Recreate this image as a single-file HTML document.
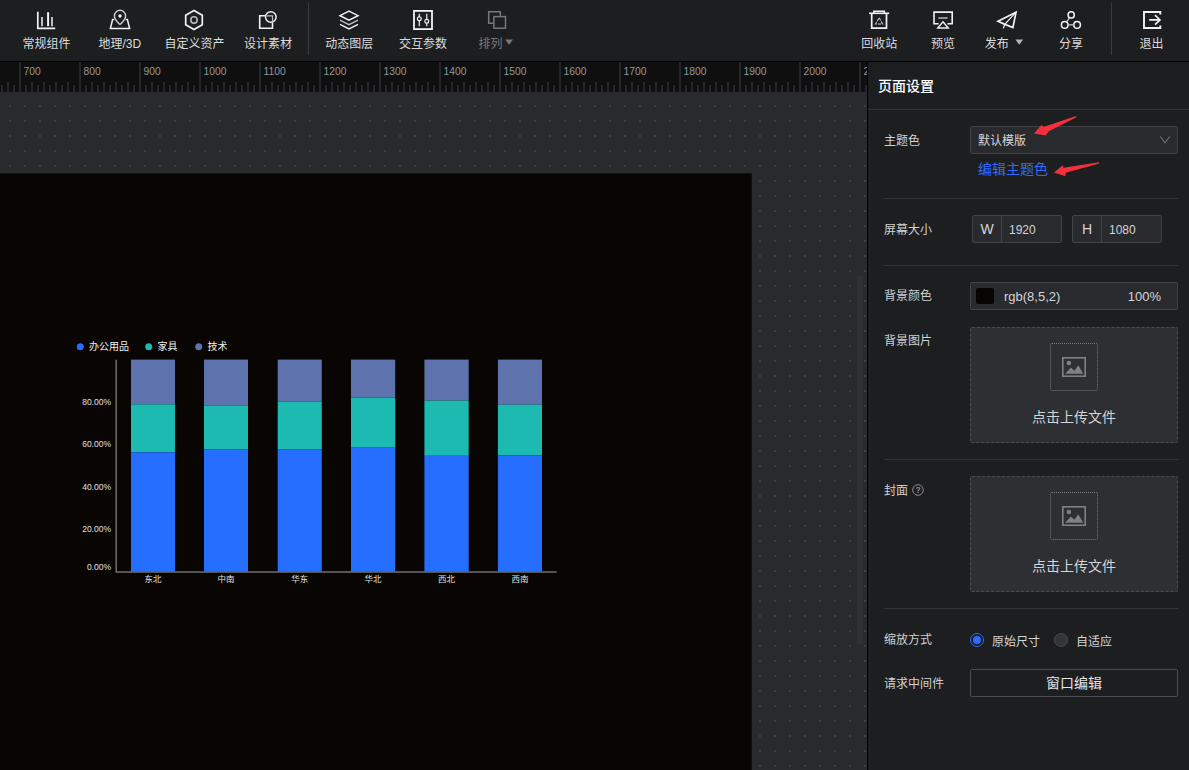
<!DOCTYPE html>
<html lang="zh-CN">
<head>
<meta charset="utf-8">
<title>页面设置</title>
<style>
*{box-sizing:border-box;margin:0;padding:0}
html,body{width:1189px;height:770px;overflow:hidden;background:#292a2e}
body{position:relative;font-family:"Liberation Sans","Noto Sans CJK SC",sans-serif;font-size:13px;color:#d4d5d7}
.abs{position:absolute}
/* toolbar */
#toolbar{position:absolute;left:0;top:0;width:1189px;height:61px;background:#1d1e20}
#tbline{position:absolute;left:0;top:61px;width:1189px;height:1px;background:#000}
.tbi{position:absolute;top:0;height:60px;width:80px;margin-left:-40px;text-align:center}
.tbi svg{position:absolute;left:50%;top:8px;margin-left:-12px;width:24px;height:24px;fill:none;stroke:#e6e6e6;stroke-width:1.5}
.tbi span{position:absolute;left:0;right:0;top:34px;font-size:12px;line-height:16px;color:#d6d7d9;white-space:nowrap}
.tbi.dis svg{stroke:#6f7073}
.tbi.dis span{color:#6f7073}
.tl{position:absolute;top:35.5px;width:100px;margin-left:-50px;text-align:center;font-size:12px;line-height:17px;color:#dcdcde;white-space:nowrap}
.tl.dis{color:#77787a}
.tbdiv{position:absolute;top:3px;width:1px;height:52px;background:#3a3b3e}
/* ruler */
#ruler{position:absolute;left:0;top:62px;width:867px;height:30px;background:#0f0f10;overflow:hidden}
#ruler svg{position:absolute;left:0;top:0}
#ruler text{font-family:"Liberation Sans",sans-serif;font-size:10.300px;fill:#96979a}
/* canvas */
#canvas{position:absolute;left:0;top:92px;width:867px;height:678px;background-color:#292a2e;
 overflow:hidden}
#page{position:absolute;left:0;top:81px;width:752px;height:600px;background:#080502;border-top:1px solid #131212;border-right:1px solid #131212}
#vscroll{position:absolute;left:857px;top:183px;width:6px;height:370px;border-radius:3px;background:#303135}
/* panel */
#panel{position:absolute;left:867px;top:62px;width:322px;height:708px;background:#1d1e20;border-left:1px solid #000}
#pc{position:absolute;left:0;top:0;width:0;height:0}
#pc .title{position:absolute;font-size:14px;font-weight:500;color:#fff;line-height:20px;white-space:nowrap}
.hr{position:absolute;height:1px;background:#333437}
.vr{position:absolute;width:1px;background:#424346}
.lbl{position:absolute;left:884px;font-size:12px;line-height:18px;color:#d0d1d3;white-space:nowrap}
.box{position:absolute;background:#292a2d;border:1px solid #424346;border-radius:2px}
.txt{position:absolute;font-size:12px;line-height:18px;color:#d4d5d7;white-space:nowrap}
.txt.c{text-align:center}
.link{position:absolute;font-size:14px;line-height:20px;color:#2f6bff;white-space:nowrap}
.upl{position:absolute;left:970px;width:208px;height:116px;background:#2e2f33;border:1px dashed #4b4c50;border-radius:2px}
.upl .ico{position:absolute;left:79px;top:15px;width:48px;height:48px;border:1px dotted #77787b;border-radius:2px}
.upl .ico svg{position:absolute;left:11px;top:13px;width:24px;height:20px}
.upl .t{position:absolute;left:0;right:0;top:79px;text-align:center;font-size:14px;line-height:20px;color:#d4d5d7}
.radio{position:absolute;width:14px;height:14px;border-radius:50%;border:1px solid #48494d;background:#333438}
.radio.on{border:1px solid #2f6bff;background:#1d1e20}
.radio.on::after{content:"";position:absolute;left:2px;top:2px;width:8px;height:8px;border-radius:50%;background:#2f6bff}
.btn{position:absolute;border:1px solid #4b4c50;border-radius:2px;text-align:center;font-size:14px;line-height:27px;color:#e4e5e7}
/* chart */
#chart text{font-family:"Liberation Sans","Noto Sans CJK SC",sans-serif}
</style>
</head>
<body>
<div id="toolbar">
<svg class="abs" style="left:0;top:0" width="1189" height="61" viewBox="0 0 1189 61" fill="none" stroke="#f2f2f2" stroke-width="1.6">
 <!-- bar chart -->
 <path d="M37.8 11.8V28.4H55.2" stroke-width="1.7"/>
 <path d="M48.1 12.2V26.2" stroke-width="2"/>
 <path d="M42 17V26.2M52 17V26.2" stroke="#bdbdbd" stroke-width="2"/>
 <!-- map pin -->
 <path d="M114.3 19.6H112.6L110.4 28.6H129.6L127.4 19.6H125.7" stroke-width="1.5"/>
 <path d="M120 24.4C116.6 21.4 114.4 18.6 114.4 15.9A5.6 5.6 0 0 1 125.6 15.9C125.600 18.600 123.400 21.400 120 24.400Z" stroke="#cfcfcf" stroke-width="1.4"/>
 <circle cx="120" cy="16" r="1.7" fill="#f2f2f2" stroke="none"/>
 <!-- hexagon -->
 <path d="M194 10.6L202.3 15.3V24.700L194 29.400L185.700 24.700V15.300Z" stroke-width="1.7"/>
 <circle cx="194" cy="20" r="3.2" stroke="#bdbdbd" stroke-width="1.5"/>
 <!-- design material -->
 <path d="M265.500 15.800H259.700V28.200H272.500V22.600" stroke-width="1.6"/>
 <circle cx="270.800" cy="17" r="5.300" stroke-width="1.5"/>
 <path d="M267 15.800H272.500V21" stroke="#bdbdbd" stroke-width="1.2"/>
 <!-- layers -->
 <path d="M349 11.200L358 15.700L349 20.200L340 15.700Z" stroke-width="1.5"/>
 <path d="M340 20.200L349 24.700L358 20.200" stroke="#bdbdbd" stroke-width="1.3"/>
 <path d="M340 24.400L349 28.900L358 24.400" stroke-width="1.4"/>
 <!-- sliders -->
 <rect x="414" y="10.900" width="18" height="18.200" stroke-width="1.8"/>
 <path d="M419.300 13.800V26.200M426.800 13.800V26.200" stroke-width="1.200"/>
 <circle cx="419.300" cy="18.700" r="1.900" fill="#1d1e20" stroke-width="1.200"/>
 <circle cx="426.800" cy="21.300" r="1.900" fill="#1d1e20" stroke-width="1.200"/>
 <!-- arrange (disabled) -->
 <g stroke="#77787a" stroke-width="1.5">
 <path d="M493.500 23.300H488.700V11.800H500.300V15.800"/>
 <rect x="493.900" y="16.600" width="11.600" height="11.600"/>
 </g>
 <path d="M505.200 39.600H513L509.100 44.800Z" fill="#77787a" stroke="none"/>
 <!-- trash -->
 <path d="M869 13.300H889.200" stroke-width="1.6"/>
 <path d="M873.800 13.300V11.300H884.400V13.300" stroke-width="1.500"/>
 <path d="M871.700 13.300V28.200H886.500V13.300" stroke-width="1.700"/>
 <path d="M879.100 17.800L882.600 24H875.600Z" stroke="#c8c8c8" stroke-width="1.100" stroke-dasharray="3.200 1.100"/>
 <!-- preview -->
 <path d="M938.600 23.700H934V12.100H952.200V23.700H947.500" stroke-width="1.600"/>
 <path d="M938.300 18H947.600" stroke="#cfcfcf" stroke-width="1.300"/>
 <path d="M943 21.800L948.300 28H937.700Z" stroke-width="1.400"/>
 <!-- publish -->
 <path d="M1016 12.200L998 21.200L1004.300 24.100L1012.900 27.600Z" stroke-width="1.700" stroke-linejoin="miter"/>
 <path d="M1016 12.200L1004.800 24.300L1003.300 28.400" stroke-width="1.200"/>
 <path d="M1015.400 39.600H1023.200L1019.300 44.800Z" fill="#b4b4b4" stroke="none"/>
 <!-- share -->
 <circle cx="1071.200" cy="14.900" r="3.100" stroke-width="1.500"/>
 <circle cx="1064.700" cy="24.900" r="3.300" stroke-width="1.500"/>
 <circle cx="1077.100" cy="24.900" r="3.300" stroke-width="1.500"/>
 <path d="M1069.600 17.600L1066.500 22.200M1068 24.900H1073.800" stroke="#cfcfcf" stroke-width="1.300"/>
 <!-- exit -->
 <path d="M1160.300 14.400V12H1144V28H1160.300V25.600" stroke-width="1.900"/>
 <path d="M1149.200 19.900H1159.800M1155 15.200L1160 19.900L1155 24.700" stroke-width="1.600"/>
</svg>
<div class="tbdiv" style="left:308px"></div>
<div class="tbdiv" style="left:1111px"></div>
<span class="tl" style="left:46.4px">常规组件</span>
<span class="tl" style="left:119.800px">地理/3D</span>
<span class="tl" style="left:194.500px">自定义资产</span>
<span class="tl" style="left:268.100px">设计素材</span>
<span class="tl" style="left:349.200px">动态图层</span>
<span class="tl" style="left:423px">交互参数</span>
<span class="tl dis" style="left:490.500px">排列</span>
<span class="tl" style="left:879.200px">回收站</span>
<span class="tl" style="left:942.900px">预览</span>
<span class="tl" style="left:996.800px">发布</span>
<span class="tl" style="left:1071px">分享</span>
<span class="tl" style="left:1151.600px">退出</span>
</div>
<div id="tbline"></div>
<div id="ruler"><svg width="867" height="30" viewBox="0 0 867 30"><path d="M-40 0V30M20 0V30M80 0V30M140 0V30M200 0V30M260 0V30M320 0V30M380 0V30M440 0V30M500 0V30M560 0V30M620 0V30M680 0V30M740 0V30M800 0V30M860 0V30M-28 20V30M-16 20V30M-4 20V30M8 20V30M32 20V30M44 20V30M56 20V30M68 20V30M92 20V30M104 20V30M116 20V30M128 20V30M152 20V30M164 20V30M176 20V30M188 20V30M212 20V30M224 20V30M236 20V30M248 20V30M272 20V30M284 20V30M296 20V30M308 20V30M332 20V30M344 20V30M356 20V30M368 20V30M392 20V30M404 20V30M416 20V30M428 20V30M452 20V30M464 20V30M476 20V30M488 20V30M512 20V30M524 20V30M536 20V30M548 20V30M572 20V30M584 20V30M596 20V30M608 20V30M632 20V30M644 20V30M656 20V30M668 20V30M692 20V30M704 20V30M716 20V30M728 20V30M752 20V30M764 20V30M776 20V30M788 20V30M812 20V30M824 20V30M836 20V30M848 20V30M-34 23V30M-22 23V30M-10 23V30M2 23V30M14 23V30M26 23V30M38 23V30M50 23V30M62 23V30M74 23V30M86 23V30M98 23V30M110 23V30M122 23V30M134 23V30M146 23V30M158 23V30M170 23V30M182 23V30M194 23V30M206 23V30M218 23V30M230 23V30M242 23V30M254 23V30M266 23V30M278 23V30M290 23V30M302 23V30M314 23V30M326 23V30M338 23V30M350 23V30M362 23V30M374 23V30M386 23V30M398 23V30M410 23V30M422 23V30M434 23V30M446 23V30M458 23V30M470 23V30M482 23V30M494 23V30M506 23V30M518 23V30M530 23V30M542 23V30M554 23V30M566 23V30M578 23V30M590 23V30M602 23V30M614 23V30M626 23V30M638 23V30M650 23V30M662 23V30M674 23V30M686 23V30M698 23V30M710 23V30M722 23V30M734 23V30M746 23V30M758 23V30M770 23V30M782 23V30M794 23V30M806 23V30M818 23V30M830 23V30M842 23V30M854 23V30M866 23V30" stroke="#2a2b2e" stroke-width="1.700"/><text x="23.5" y="12.800">700</text><text x="83.5" y="12.800">800</text><text x="143.5" y="12.800">900</text><text x="203.5" y="12.800">1000</text><text x="263.5" y="12.800">1100</text><text x="323.5" y="12.800">1200</text><text x="383.5" y="12.800">1300</text><text x="443.5" y="12.800">1400</text><text x="503.5" y="12.800">1500</text><text x="563.5" y="12.800">1600</text><text x="623.5" y="12.800">1700</text><text x="683.5" y="12.800">1800</text><text x="743.5" y="12.800">1900</text><text x="803.5" y="12.800">2000</text><text x="863.5" y="12.800">2100</text></svg></div>
<div id="canvas">
  <svg class="abs" style="left:0;top:0" width="867" height="678"><defs><pattern id="dots" x="9" y="13" width="15" height="15" patternUnits="userSpaceOnUse"><rect width="2" height="2" fill="#3e3f43"/></pattern></defs><rect width="867" height="678" fill="url(#dots)"/></svg>
  <div id="page"></div>
  <div id="vscroll"></div>
</div>
<svg id="chart" class="abs" style="left:0;top:0" width="751" height="770" viewBox="0 0 751 770"><rect x="131.0" y="359.6" width="44.0" height="44.7" fill="#5e73ad"/><rect x="131.0" y="404.3" width="44.0" height="48.0" fill="#1cbab1"/><rect x="131.0" y="452.3" width="44.0" height="119.3" fill="#256eff"/><rect x="204.0" y="359.6" width="44.0" height="45.8" fill="#5e73ad"/><rect x="204.0" y="405.4" width="44.0" height="43.8" fill="#1cbab1"/><rect x="204.0" y="449.2" width="44.0" height="122.4" fill="#256eff"/><rect x="277.7" y="359.6" width="44.1" height="41.9" fill="#5e73ad"/><rect x="277.7" y="401.5" width="44.1" height="48.0" fill="#1cbab1"/><rect x="277.7" y="449.5" width="44.1" height="122.1" fill="#256eff"/><rect x="351.0" y="359.6" width="44.2" height="38.0" fill="#5e73ad"/><rect x="351.0" y="397.6" width="44.2" height="49.5" fill="#1cbab1"/><rect x="351.0" y="447.1" width="44.2" height="124.5" fill="#256eff"/><rect x="424.4" y="359.6" width="44.3" height="40.9" fill="#5e73ad"/><rect x="424.4" y="400.5" width="44.3" height="55.3" fill="#1cbab1"/><rect x="424.4" y="455.8" width="44.3" height="115.8" fill="#256eff"/><rect x="497.9" y="359.6" width="44.1" height="45.1" fill="#5e73ad"/><rect x="497.9" y="404.7" width="44.1" height="50.8" fill="#1cbab1"/><rect x="497.9" y="455.5" width="44.1" height="116.1" fill="#256eff"/><path d="M116.200 359.700V572.800M115.400 572.100H556.600" fill="none" stroke="#707070" stroke-width="1.500"/><circle cx="80.300" cy="346.700" r="3.500" fill="#256eff"/><circle cx="148.700" cy="346.700" r="3.500" fill="#1cbab1"/><circle cx="198.700" cy="346.700" r="3.500" fill="#5e73ad"/><g font-size="10" fill="#f0f0f0"><text x="89" y="350">办公用品</text><text x="157.500" y="350">家具</text><text x="207.500" y="350">技术</text></g><g font-size="8.500" fill="#e0e0e0" text-anchor="end"><text x="111" y="405.2">80.00%</text><text x="111" y="447.2">60.00%</text><text x="111" y="490.2">40.00%</text><text x="111" y="532.2">20.00%</text><text x="111" y="570.2">0.00%</text></g><g font-size="8.500" fill="#e0e0e0" text-anchor="middle"><text x="153.0" y="582">东北</text><text x="226.0" y="582">中南</text><text x="299.8" y="582">华东</text><text x="373.1" y="582">华北</text><text x="446.5" y="582">西北</text><text x="520.0" y="582">西南</text></g></svg>
<div id="panel"></div>
<div id="pc">
  <div class="title" style="left:878px;top:75.500px">页面设置</div>
  <div class="hr" style="left:868px;top:109px;width:321px"></div>

  <div class="lbl" style="top:132px">主题色</div>
  <div class="box" style="left:970px;top:126px;width:208px;height:28px"></div>
  <div class="txt" style="left:978px;top:132px">默认模版</div>
  <svg class="abs" style="left:1158px;top:134px" width="14" height="12" viewBox="0 0 14 12"><path d="M2.300 2.500L7 8.800L11.700 2.500" fill="none" stroke="#6e6f72" stroke-width="1.1"/></svg>
  <div class="link" style="left:978px;top:159px">编辑主题色</div>
  <svg class="abs" style="left:1020px;top:110px" width="90" height="75" viewBox="1020 110 90 75">
    <g fill="#f4303f" stroke="none">
      <path d="M1076 116L1076.500 117.200L1048.800 131.200L1045.600 135.600L1034 133.400L1041.500 125L1043.400 127Z"/>
      <path d="M1099 162.300L1099.200 163.500L1065.800 172.800L1065.400 176.300L1054 172.600L1062.800 165.200L1063.400 167.700Z"/>
    </g>
  </svg>
  <div class="hr" style="left:884px;top:198px;width:294px"></div>

  <div class="lbl" style="top:221px">屏幕大小</div>
  <div class="box" style="left:972px;top:215px;width:90px;height:28px"></div>
  <div class="vr" style="left:1001px;top:216px;height:26px"></div>
  <div class="txt c" style="left:972px;width:30px;top:220px;font-size:14px">W</div>
  <div class="txt" style="left:1009px;top:221px">1920</div>
  <div class="box" style="left:1072px;top:215px;width:90px;height:28px"></div>
  <div class="vr" style="left:1101px;top:216px;height:26px"></div>
  <div class="txt c" style="left:1072px;width:30px;top:220px;font-size:14px">H</div>
  <div class="txt" style="left:1109px;top:221px">1080</div>
  <div class="hr" style="left:884px;top:265px;width:294px"></div>

  <div class="lbl" style="top:287px">背景颜色</div>
  <div class="box" style="left:970px;top:282px;width:208px;height:28px"></div>
  <div class="abs" style="left:976px;top:288px;width:18px;height:16px;background:#080502;border-radius:2px"></div>
  <div class="txt" style="left:1004px;top:288px;font-size:13px">rgb(8,5,2)</div>
  <div class="txt" style="left:1100px;width:61px;text-align:right;top:288px;font-size:13px">100%</div>

  <div class="lbl" style="top:332px">背景图片</div>
  <div class="upl" style="top:327px"><div class="ico"><svg viewBox="0 0 24 20"><rect x="0.800" y="0.800" width="22.400" height="18.400" fill="none" stroke="#808184" stroke-width="1.600"/><circle cx="6.900" cy="6" r="2.200" fill="#808184"/><path d="M3 16.800L9 10.600L12.300 13.800L16.300 8.200L21.200 16.800Z" fill="#808184"/></svg></div><div class="t">点击上传文件</div></div>
  <div class="hr" style="left:884px;top:459px;width:294px"></div>

  <div class="lbl" style="top:482px">封面</div>
  <svg class="abs" style="left:911px;top:483px" width="14" height="14" viewBox="0 0 14 14"><circle cx="7" cy="7" r="5.300" fill="none" stroke="#8b8c8f" stroke-width="1"/><text x="7" y="10.200" text-anchor="middle" font-size="8.500" font-weight="bold" fill="#8b8c8f" font-family="Liberation Sans, sans-serif">?</text></svg>
  <div class="upl" style="top:476px"><div class="ico"><svg viewBox="0 0 24 20"><rect x="0.800" y="0.800" width="22.400" height="18.400" fill="none" stroke="#808184" stroke-width="1.600"/><circle cx="6.900" cy="6" r="2.200" fill="#808184"/><path d="M3 16.800L9 10.600L12.300 13.800L16.300 8.200L21.200 16.800Z" fill="#808184"/></svg></div><div class="t">点击上传文件</div></div>
  <div class="hr" style="left:884px;top:608px;width:294px"></div>

  <div class="lbl" style="top:631px">缩放方式</div>
  <div class="radio on" style="left:970px;top:633px"></div>
  <div class="txt" style="left:992px;top:633px">原始尺寸</div>
  <div class="radio" style="left:1054px;top:633px"></div>
  <div class="txt" style="left:1076px;top:633px">自适应</div>

  <div class="lbl" style="top:675px">请求中间件</div>
  <div class="btn" style="left:970px;top:669px;width:208px;height:28px">窗口编辑</div>
</div>
</body>
</html>
